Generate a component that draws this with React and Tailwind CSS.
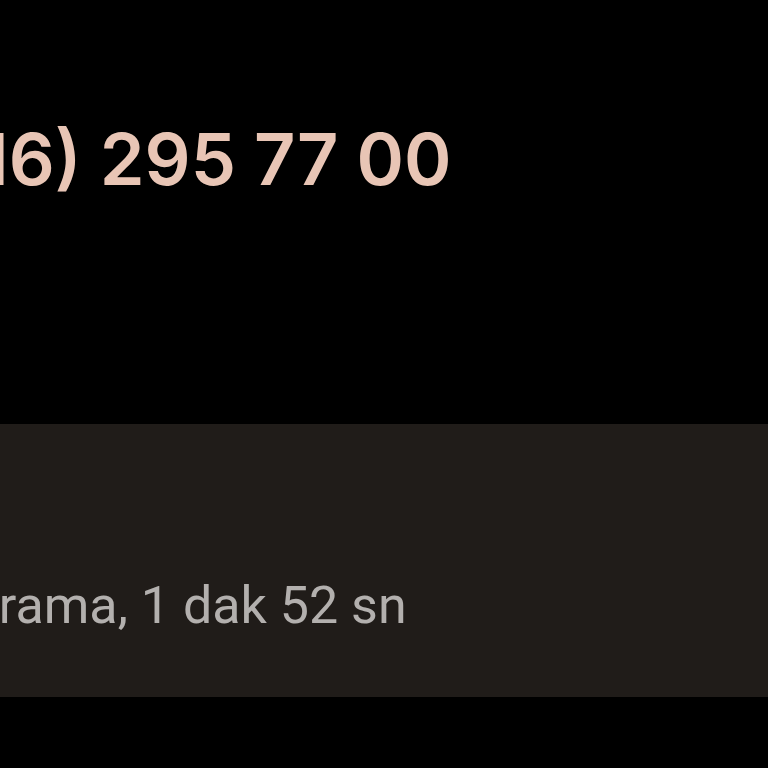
export default function App() {
  return (
    <div className="w-[768px] h-[768px] bg-black overflow-hidden flex flex-col">
      <div className="h-[424px] shrink-0 overflow-hidden pt-[111px]">
        <div
          className="whitespace-nowrap text-[#e8c5b5] font-semibold text-[72px] leading-[96px] ml-[-141px]"
          style={{ fontFamily: 'Inter, "Noto Sans", sans-serif' }}
        >
          (0216) 295 77 00
        </div>
      </div>
      <div className="h-[273px] shrink-0 bg-[#201c19] overflow-hidden pt-[150px]">
        <div
          className="whitespace-nowrap text-[#b3b0ae] text-[52px] leading-[64px] ml-[-176px]"
          style={{ fontFamily: 'Roboto, sans-serif' }}
        >
          Giden arama, 1 dak 52 sn
        </div>
      </div>
    </div>
  );
}
